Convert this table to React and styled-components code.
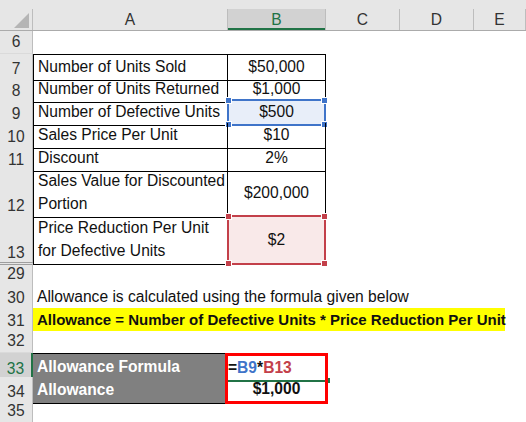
import React from 'react';
import styled, { createGlobalStyle, css } from 'styled-components';

const GlobalStyle = createGlobalStyle`
  body {
    margin: 0;
    background: #ffffff;
    font-family: "Liberation Sans", Arial, sans-serif;
  }
`;

const COLS = '33px 195px 98px 74px 74px 52px';

const Sheet = styled.div`
  width: 526px;
  height: 422px;
  overflow: hidden;
  background: #ffffff;
  font-size: 15.6px;
  color: #111;
`;

const HeaderRow = styled.div`
  display: grid;
  grid-template-columns: ${COLS};
  height: 31px;
  padding-top: 9px;
  box-sizing: border-box;
  background: #e6e6e6;
  border-bottom: 1px solid #ababab;
`;

const Corner = styled.div`
  position: relative;
  border-right: 1px solid #bdbdbd;
  &::after {
    content: '';
    position: absolute;
    right: 3px;
    bottom: 2px;
    width: 0;
    height: 0;
    border-left: 15px solid transparent;
    border-bottom: 15px solid #b5b5b5;
  }
`;

const ColHead = styled.div`
  display: flex;
  align-items: center;
  justify-content: center;
  border-right: 1px solid #bdbdbd;
  color: #333;
  font-size: 15.6px;
  ${(p) =>
    p.$selected &&
    css`
      background: #d2d2d2;
      color: #217346;
      box-shadow: inset 0 -2px 0 #217346;
    `}
`;

const Row = styled.div`
  display: grid;
  grid-template-columns: ${COLS};
  height: ${(p) => p.$h || 23}px;
`;

const RowHead = styled.div`
  display: flex;
  align-items: flex-end;
  justify-content: center;
  padding-bottom: 2px;
  box-sizing: border-box;
  background: #e6e6e6;
  border-right: 1px solid #bdbdbd;
  border-bottom: 1px solid #dadada;
  color: #333;
  font-size: 15.6px;
  ${(p) =>
    p.$double &&
    css`
      border-top: 3px double #9e9e9e;
    `}
  ${(p) =>
    p.$selected &&
    css`
      background: #d2d2d2;
      color: #217346;
      border-right: 2px solid #217346;
    `}
`;

const Cell = styled.div`
  position: relative;
  display: flex;
  align-items: ${(p) => (p.$middle ? 'center' : 'flex-end')};
  justify-content: ${(p) => (p.$center ? 'center' : 'flex-start')};
  padding: 0 4px 2px 4px;
  box-sizing: border-box;
  white-space: nowrap;
  line-height: 23px;
  font-weight: ${(p) => (p.$bold ? 700 : 400)};
  background: ${(p) => p.$bg || 'transparent'};
  color: ${(p) => p.$color || '#111'};
  ${(p) => p.$span && css`grid-column: 2 / -1;`}
  ${(p) =>
    p.$box &&
    css`
      border-right: 1px solid #000;
      border-bottom: 1px solid #000;
    `}
  ${(p) => p.$boxLeft && css`border-left: 1px solid #000;`}
  ${(p) => p.$boxTop && css`border-top: 1px solid #000;`}
`;

const Lines = styled.div`
  display: flex;
  flex-direction: column;
  line-height: 23px;
`;

const Selection = styled.div`
  position: absolute;
  inset: -1px -1px -1px -1px;
  border: 2px solid ${(p) => p.$color};
  pointer-events: none;
`;

const Handle = styled.span`
  position: absolute;
  width: 5px;
  height: 5px;
  background: ${(p) => p.$color};
  border: 1px solid #fff;
  ${(p) => (p.$top ? 'top: -4px;' : 'bottom: -4px;')}
  ${(p) => (p.$left ? 'left: -4px;' : 'right: -4px;')}
`;

const RedBox = styled(Cell)`
  border-left: 3px solid #ff0000;
  border-right: 3px solid #ff0000;
  margin: 0 -2px 0 -3px;
  ${(p) => (p.$first ? 'border-top: 3px solid #ff0000;' : 'border-bottom: 3px solid #ff0000; padding-bottom: 1px;')}
`;

const ActiveLine = styled.span`
  position: absolute;
  left: 0;
  right: -2px;
  bottom: -1px;
  height: 2px;
  background: #217346;
  &::after {
    content: '';
    position: absolute;
    right: -3px;
    top: -2px;
    width: 4px;
    height: 5px;
    background: #217346;
  }
`;

const Highlight = styled.span`
  display: inline-block;
  width: 468px;
  margin-left: -4px;
  padding-left: 4px;
  background: #ffff00;
  font-weight: 700;
  height: 23px;
  font-size: 15px;
`;

const Ref = styled.span`
  color: ${(p) => p.$color};
`;

function SelBox({ color }) {
  return (
    <Selection $color={color}>
      <Handle $color={color} $top $left />
      <Handle $color={color} $top />
      <Handle $color={color} $left />
      <Handle $color={color} />
    </Selection>
  );
}

const tableRows = [
  { n: 7, label: ['Number of Units Sold'], value: '$50,000' },
  { n: 8, label: ['Number of Units Returned'], value: '$1,000' },
  { n: 9, label: ['Number of Defective Units'], value: '$500', sel: 'blue' },
  { n: 10, label: ['Sales Price Per Unit'], value: '$10' },
  { n: 11, label: ['Discount'], value: '2%' },
  { n: 12, label: ['Sales Value for Discounted', 'Portion'], value: '$200,000', h: 47 },
  { n: 13, label: ['Price Reduction Per Unit', 'for Defective Units'], value: '$2', h: 46, sel: 'red' },
];

export default function App() {
  return (
    <>
      <GlobalStyle />
      <Sheet>
        <HeaderRow>
          <Corner />
          <ColHead>A</ColHead>
          <ColHead $selected>B</ColHead>
          <ColHead>C</ColHead>
          <ColHead>D</ColHead>
          <ColHead>E</ColHead>
        </HeaderRow>

        <Row>
          <RowHead>6</RowHead>
        </Row>

        {tableRows.map((r, i) => (
          <Row key={r.n} $h={r.h}>
            <RowHead>{r.n}</RowHead>
            <Cell $box $boxLeft $boxTop={i === 0}>
              <Lines>
                {r.label.map((l) => (
                  <span key={l}>{l}</span>
                ))}
              </Lines>
            </Cell>
            <Cell
              $box
              $boxTop={i === 0}
              $center
              $middle
              $bg={r.sel === 'blue' ? '#e8eef9' : r.sel === 'red' ? '#f9e9e9' : undefined}
            >
              {r.value}
              {r.sel === 'blue' && <SelBox color="#3f74c9" />}
              {r.sel === 'red' && <SelBox color="#c3404a" />}
            </Cell>
          </Row>
        ))}

        <Row>
          <RowHead $double>29</RowHead>
        </Row>
        <Row>
          <RowHead>30</RowHead>
          <Cell $span>Allowance is calculated using the formula given below</Cell>
        </Row>
        <Row>
          <RowHead>31</RowHead>
          <Cell $span>
            <Highlight>Allowance = Number of Defective Units * Price Reduction Per Unit</Highlight>
          </Cell>
        </Row>
        <Row $h={22}>
          <RowHead>32</RowHead>
        </Row>
        <Row $h={24}>
          <RowHead $selected>33</RowHead>
          <Cell $box $boxTop $bold $bg="#808080" $color="#ffffff">
            Allowance Formula
          </Cell>
          <RedBox $first $bold style={{ paddingLeft: 0 }}>
            =<Ref $color="#3f74c9">B9</Ref>*<Ref $color="#c3404a">B13</Ref>
            <ActiveLine />
          </RedBox>
        </Row>
        <Row>
          <RowHead>34</RowHead>
          <Cell $box $bold $bg="#808080" $color="#ffffff">
            Allowance
          </Cell>
          <RedBox $bold $center>
            $1,000
          </RedBox>
        </Row>
        <Row>
          <RowHead>35</RowHead>
        </Row>
      </Sheet>
    </>
  );
}
